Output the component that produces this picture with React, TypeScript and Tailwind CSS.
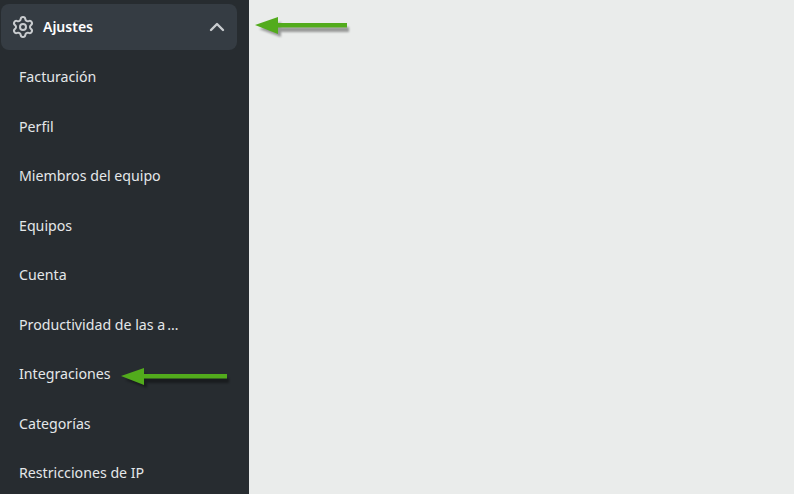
import { ChevronUp, Settings } from "lucide-react";

const items = [
  "Facturación",
  "Perfil",
  "Miembros del equipo",
  "Equipos",
  "Cuenta",
  "Productividad de las a",
  "Integraciones",
  "Categorías",
  "Restricciones de IP",
];

function Arrow({ className, end }: { className: string; end: number }) {
  return (
    <svg className={className} width={end + 10} height="28" viewBox={`0 0 ${end + 10} 28`} aria-hidden="true">
      <path d={`M2 14 L24 7 L24 12 L${end} 12 L${end} 17 L24 17 L24 22 Z`} fill="#000" opacity="0.35" transform="translate(2 2)" style={{ filter: "blur(1px)" }} />
      <path d={`M0 12 L23 4 L23 10 L${end} 10 L${end} 14.5 L23 14.5 L23 21 Z`} fill="#52ab1c" />
    </svg>
  );
}

export default function App() {
  return (
    <div className="relative flex h-[494px] w-[794px] overflow-hidden bg-[#eaeceb] font-['Noto_Sans',sans-serif]">
      <aside className="flex h-full w-[249px] shrink-0 flex-col overflow-hidden bg-[#272c30] pl-[1px] pr-[12px] pt-[4px]">
        <div className="flex h-[46px] shrink-0 items-center rounded-lg bg-[#353c43] pl-[10px] pr-[8px]">
          <Settings size={24} strokeWidth={2} className="text-[#c9cccf]" />
          <span className="mb-[2px] ml-[8px] text-[14px] font-semibold text-white">Ajustes</span>
          <ChevronUp size={24} strokeWidth={2.4} className="ml-auto text-[#c9cccf]" />
        </div>
        <nav className="mt-[2px] flex shrink-0 flex-col">
          {items.map((item) => (
            <div key={item} className="flex h-[49.5px] shrink-0 items-center pl-[18px] text-[14.2px] text-[#e4e7e9]">
              <span>
                {item}
                {item.endsWith(" a") && <span className="ml-[2px] tracking-[1.5px]">…</span>}
              </span>
            </div>
          ))}
        </nav>
      </aside>
      <Arrow className="absolute left-[255px] top-[13px]" end={92} />
      <Arrow className="absolute left-[121px] top-[364px]" end={106} />
    </div>
  );
}
